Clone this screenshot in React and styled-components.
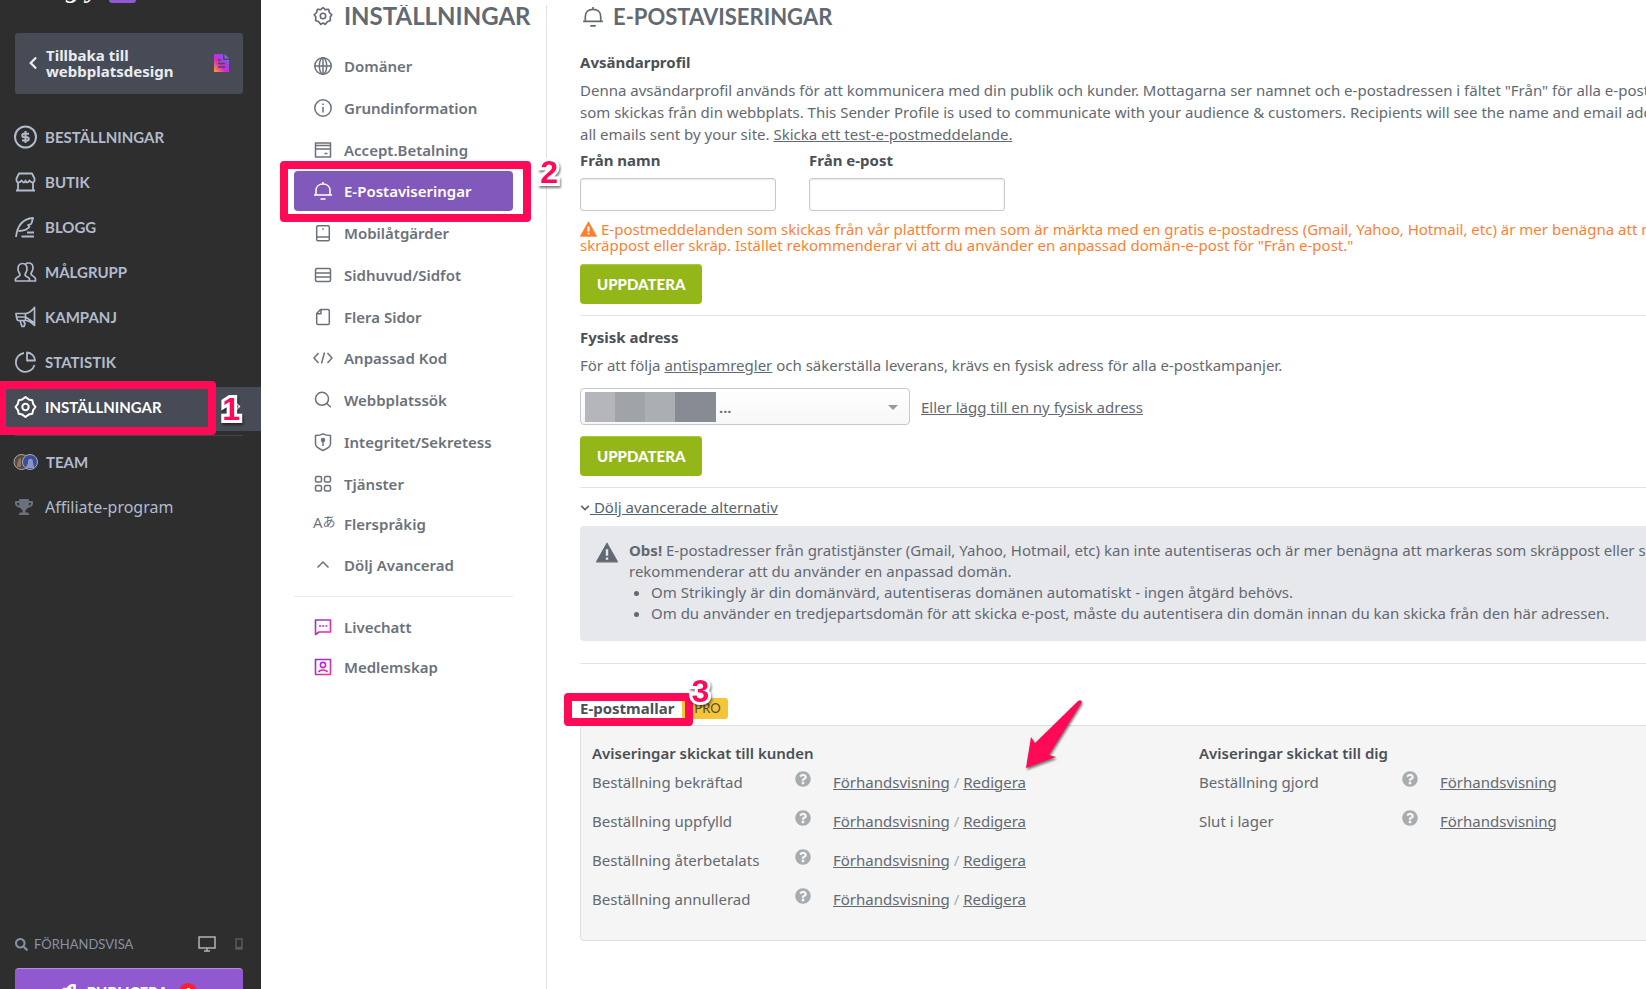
import React, { useState } from "react";
import styled, { createGlobalStyle } from "styled-components";
import { FaSearch, FaQuestionCircle, FaChevronLeft, FaChevronRight, FaChevronDown, FaTrophy, FaRocket } from "react-icons/fa";

const pink = "#ff0a57";
const sans = `"Noto Sans", "Open Sans", sans-serif`;
const display = `Lato, "Open Sans", sans-serif`;

const GlobalStyle = createGlobalStyle`
    * {
        box-sizing: border-box;
    }
    body {
        margin: 0;
        background: #fff;
        color: #636972;
        font-family: ${sans};
        font-size: 15px;
    }
    ul, h1, h2, h3, p {
        margin: 0;
        padding: 0;
    }
    a {
        color: inherit;
    }
`

const Page = styled.div`
    display: flex;
    height: 100vh;
    overflow: hidden;
`

/* dark sidebar */
const Sidebar = styled.aside`
    display: flex;
    flex-direction: column;
    flex: none;
    width: 261px;
    background: #2e2e2e;
    color: #b1bbcd;
`
const Logo = styled.div`
    display: flex;
    align-items: flex-end;
    gap: 11px;
    height: 33px;
    margin-top: -27px;
    margin-bottom: 27px;
    padding-right: 125px;
    justify-content: flex-end;
    color: #fff;
    font: italic bold 26px/33px "Liberation Serif", serif;
`
const Plan = styled.span`
    flex: none;
    width: 27px;
    height: 20px;
    margin: 0 0 3px;
    border-radius: 3px;
    background: #9159d0;
`
const BackLink = styled.a`
    display: flex;
    align-items: center;
    height: 61px;
    margin: 0 18px 23px 15px;
    padding: 0 14px 2px 11px;
    gap: 6px;
    border-radius: 3px;
    background: #474b55;
    color: #e9ecf2;
    font-weight: 700;
    font-size: 15px;
    line-height: 16px;
    text-decoration: none;

    span {
        flex: 1;
    }
`
const MainNav = styled.nav`
    display: flex;
    flex-direction: column;
    gap: 1px;
`
const NavLink = styled.a`
    position: relative;
    display: flex;
    align-items: center;
    height: 44px;
    padding: 0 18px 5px 13px;
    gap: 8px;
    background: ${props => props.$active ? "#474b55" : "none"};
    color: ${props => props.$active ? "#fff" : "inherit"};
    font-family: ${props => props.$plain ? sans : display};
    font-weight: ${props => props.$plain ? 400 : 700};
    font-size: ${props => props.$plain ? 16 : 15}px;
    text-decoration: none;

    > svg {
        flex: none;
    }
    > span {
        flex: 1;
    }
`
const NavLine = styled.hr`
    width: 228px;
    margin: 3px 15px 5px;
    border: 0;
    border-top: 1px solid #444;
`
const SidebarFooter = styled.div`
    margin: auto 18px -25px 15px;
`
const PreviewRow = styled.div`
    display: flex;
    align-items: center;
    height: 30px;
    margin-bottom: 9px;
    gap: 19px;
    color: #8791a6;
`
const PreviewButton = styled.button`
    display: flex;
    align-items: center;
    flex: 1;
    gap: 6px;
    padding: 0;
    border: 0;
    background: none;
    color: inherit;
    font: 400 13px ${display};
`
const PublishButton = styled.button`
    display: flex;
    align-items: center;
    justify-content: center;
    width: 100%;
    height: 46px;
    gap: 11px;
    border: 0;
    border-top: 1px solid #b78ae8;
    border-radius: 4px;
    background: #9159d0;
    color: #fff;
    font: 900 15px ${display};
`
const Alert = styled.span`
    width: 18px;
    height: 18px;
    border-radius: 50%;
    background: #f5222d;
    font: 700 15px/18px ${sans};
`

/* settings column */
const Settings = styled.aside`
    flex: none;
    width: 286px;
    margin-top: 5px;
    padding: 0 33px;
    border-right: 1px solid #dfe1e5;
`
const SettingsTitle = styled.h1`
    display: flex;
    align-items: center;
    height: 22px;
    margin: 0 -18px 19px 0;
    padding-left: 19px;
    gap: 11px;
    overflow: hidden;
    font: 700 24px/22px ${display};
    white-space: nowrap;

    svg {
        flex: none;
    }
`
const SettingsItem = styled.a`
    position: relative;
    display: flex;
    align-items: center;
    height: 40px;
    margin-bottom: ${props => props.$gap}px;
    padding-left: 19px;
    gap: 11px;
    border-radius: 4px;
    background: ${props => props.$active ? "#8159bb" : "none"};
    color: ${props => props.$active ? "#fff" : "#6b717b"};
    font-weight: 600;
    font-size: 15px;
    line-height: 22px;
    text-decoration: none;
    white-space: nowrap;

    svg {
        flex: none;
    }
`
const SettingsLine = styled.hr`
    margin: 11px 0 10px;
    border: 0;
    border-top: 1px solid #ececee;
`

/* main content */
const Main = styled.main`
    flex: 1;
    min-width: 0;
    padding: 5px 0 0 33px;
    overflow: hidden;
`
const Content = styled.div`
    min-width: 1238px;
`
const Title = styled.h2`
    display: flex;
    align-items: center;
    height: 24px;
    margin-bottom: 22px;
    padding-left: 2px;
    gap: 9px;
    font: 700 22px/24px ${display};
`
const Label = styled.h3`
    color: #4b5056;
    font-weight: ${props => props.$semi ? 600 : 700};
    font-size: 15px;
    line-height: 22px;
`
const Text = styled.p`
    margin: 6px 0 4px;
    line-height: 22px;
`
const Fields = styled.div`
    display: flex;
    gap: 33px;
`
const Field = styled.label`
    width: 196px;
    color: #4b5056;
    font-weight: 700;
    line-height: 22px;
`
const Input = styled.input`
    display: block;
    width: 100%;
    height: 33px;
    margin-top: 7px;
    border: 1px solid #c6c9d0;
    border-radius: 3px;
    box-shadow: inset 0 1px 2px #e9e9e9;
`
const Warning = styled.p`
    margin: 10px 0 11px;
    color: #ff7f32;
    line-height: 16px;

    svg {
        margin-right: 4px;
        vertical-align: -2px;
    }
`
const UpdateButton = styled.button`
    display: block;
    height: 40px;
    padding: 0 17px;
    border: 0;
    border-radius: 4px;
    background: #93b719;
    box-shadow: inset 0 1px 0 #a9cb38;
    color: #fff;
    font: 900 15px ${display};
`
const Line = styled.hr`
    margin: 11px 0 10px;
    border: 0;
    border-top: 1px solid #e2e4e7;
`
const AddressRow = styled.div`
    display: flex;
    align-items: center;
    gap: 11px;
    margin: 12px 0 11px;
`
const SelectBox = styled.div`
    position: relative;
    width: 330px;

    > svg {
        position: absolute;
        right: 12px;
        top: 17px;
        pointer-events: none;
    }
`
const Select = styled.select`
    display: block;
    appearance: none;
    width: 100%;
    height: 37px;
    padding: 0 30px 0 138px;
    border: 1px solid #c6c9cc;
    border-radius: 4px;
    background: linear-gradient(#fff, #f7f7f7);
    color: #636972;
    font: 600 15px ${sans};
`
const Mosaic = styled.div`
    position: absolute;
    left: 5px;
    top: 4px;
    display: grid;
    grid-template-columns: 30px 30px 30px 41px;
    height: 30px;
    pointer-events: none;
`
const Tile = styled.span`
    background: ${props => props.$color};
`
const Toggle = styled.a`
    display: block;
    width: fit-content;
    margin-bottom: 10px;
    color: #54636d;
    line-height: 18px;
`
const Notice = styled.div`
    display: flex;
    gap: 11px;
    margin-bottom: 22px;
    padding: 14px 16px 17px;
    border-radius: 4px;
    background: #e7e8ec;
    line-height: 21px;

    > svg {
        flex: none;
        margin-top: 2px;
    }
    ul {
        padding-left: 22px;
    }
`
const TemplatesHead = styled.div`
    display: flex;
    align-items: center;
    gap: 8px;
    height: 22px;
    margin: 33px 0 6px;
`
const Marked = styled.div`
    position: relative;
`
const Pro = styled.span`
    padding: 0 7px 0 12px;
    border-radius: 3px;
    background: #f4c536;
    color: #4f4a36;
    font: 400 13px/21px ${display};
`
const Panel = styled.div`
    display: grid;
    grid-template-columns: 1fr 1fr;
    padding: 16px 11px 17px;
    border: 1px solid #dcdddf;
    border-radius: 4px;
    background: #f5f5f5;
`
const Table = styled.table`
    width: 100%;
    margin-top: 3px;
    border-collapse: collapse;
    table-layout: fixed;

    td {
        height: 39px;
        padding: 0 0 10px;
    }
    td:first-child {
        width: 203px;
    }
    td:nth-child(2) {
        width: 38px;
        padding-bottom: 16px;
    }
`
const Help = styled.button`
    display: block;
    padding: 0;
    border: 0;
    background: none;
    color: #a7acb0;
    font-size: 16px;
    line-height: 0;
`
const Slash = styled.span`
    color: #a9adb3;
`

/* tutorial marks on top of the page */
const Frame = styled.span`
    position: absolute;
    z-index: 2;
    left: ${props => props.$left}px;
    right: ${props => props.$right}px;
    top: ${props => props.$top}px;
    bottom: ${props => props.$bottom}px;
    border: 8px solid ${pink};
    border-radius: 4px;
    pointer-events: none;
`
const Step = styled.b`
    position: absolute;
    z-index: 3;
    right: ${props => props.$right}px;
    top: ${props => props.$top}px;
    color: ${pink};
    font: 700 32px/32px "Liberation Sans", Arial, sans-serif;
    -webkit-text-stroke: 6px #fff;
    paint-order: stroke fill;
    filter: drop-shadow(1px 2px 1px rgba(0, 0, 0, 0.5));
    pointer-events: none;
`
const ArrowSpot = styled.span`
    position: relative;

    svg {
        position: absolute;
        left: 100%;
        bottom: calc(100% + 4px);
        overflow: visible;
        filter: drop-shadow(1px 2px 1px rgba(0, 0, 0, 0.5));
        pointer-events: none;
    }
`

const Icon = ({ size = 24, w = 2, box = 24, children, ...rest }) => (
    <svg width={size} height={size} viewBox={`0 0 ${box} ${box}`} fill="none" stroke="currentColor"
        strokeWidth={w} strokeLinejoin="round" aria-hidden="true" {...rest}>
        {children}
    </svg>
)

const gear = "M10 1.5 L12.2 3.6 L15.6 3.2 L16.4 6.5 L18.8 8.8 L17.2 11 L17.4 14.6 L14.3 15.7 L12.2 18.4 L10 17 L7.8 18.4 L5.7 15.7 L2.6 14.6 L2.8 11 L1.2 8.8 L3.6 6.5 L4.4 3.2 L7.8 3.6 Z"

const navIcons = {
    orders: <Icon><circle cx="12.5" cy="12" r="10.5" /><path d="M16 8.8h-5a1.7 1.7 0 0 0 0 3.4h3a1.7 1.7 0 0 1 0 3.400H9M12.5 6v12" /></Icon>,
    store: <Icon w="1.8"><path d="M6 3.5h13l2.5 5v2c0 1.5-1.500 2-2 2s-2-.500-3-2c-1 1.500-2 2-2.500 2s-1-.500-1.500-2c-.500 1.500-1 2-1.500 2s-1.500-.500-2.500-2c-1 1.500-2.500 2-3 2s-2-.500-2-2v-2zM5 12.5v8h15v-8M3 20.500h19" /></Icon>,
    blog: <Icon w="1.8"><path d="M3 22c1-9 5-18 17-19-1 3-1 5-2 6l-3 1 1.5 1.500C14 15.500 9 16 5.500 16M14 17.500h7M8.500 21.500H21" /></Icon>,
    people: <Icon w="1.7"><path d="M2.5 21v-2c1-2 4-2 4.500-4 0-1.500-2-3-2-6s1.500-5.500 4.500-5.500S14 6 14 9s-2 4.500-2 6c.500 2 4.500 2 4.500 4v2zM12.500 4c1-1 2-1 3-1 3 0 4.500 2 4.500 5s-2 4.500-2 6c.500 2 4.500 2.500 4.500 5v2h-6" /></Icon>,
    campaign: <Icon w="1.7"><path d="M21.5 2.500v18c-4-4-6-5-9-5H5.500c-1.500 0-1.500-1-2-3.500l-.500-3.500h9.500c3 0 5-1 9-6zM12.500 8.500v7M3.500 12h9M7 15.500l2 6h2l1-3-2-3M12.500 12l9 6" /></Icon>,
    stats: <Icon w="1.8"><path d="M11 3a9.5 9.5 0 1 0 10.500 12M14 2.500v8h8a8.500 8.500 0 0 0-8-8z" /></Icon>,
    settings: <Icon w="2"><path d="M12.5 2L15.700 4.400L19.300 5.200L20.100 8.800L22.500 12L20.100 15.200L19.300 18.800L15.700 19.600L12.500 22L9.300 19.600L5.700 18.800L4.900 15.200L2.500 12L4.900 8.800L5.700 5.200L9.300 4.400z" /><circle cx="12.5" cy="12" r="3.2" /></Icon>,
}

const bell = <path d="M1 14h18M3 14V9.500C3 5.500 6 3 10 3s7 2.500 7 6.500V14M10 1v2M7.500 18h5" />

const icons = {
    globe: <><circle cx="10" cy="10" r="8.2" /><ellipse cx="10" cy="10" rx="3.7" ry="8.2" /><path d="M1.8 10h16.4M10 1.8v16.4" /></>,
    info: <><circle cx="10" cy="10" r="8.2" /><path d="M10 9v5.5M10 5.5v1.8" /></>,
    card: <path d="M2.5 3h15v14h-15zM2.5 5.5h15M2.5 9h15M11.5 13.5h3" />,
    bell,
    mobile: <path d="M5 2.7h10q1.3 0 1.3 1.3v12.5q0 1.3-1.3 1.3H5q-1.3 0-1.3-1.300V4q0-1.300 1.300-1.300zM4 14h12M9.200 6h1.600" />,
    header: <path d="M4 3.5h12q1.5 0 1.5 1.5v10q0 1.5-1.5 1.5H4q-1.500 0-1.500-1.500V5q0-1.500 1.500-1.500zM2.500 8h15M2.500 12h15" />,
    pages: <path d="M7.5 2.5H15q1.3 0 1.3 1.3v12.4q0 1.3-1.3 1.3H5q-1.3 0-1.3-1.300V6.500zM8 2.500v4.300H3.700" />,
    code: <path d="M5.5 5L1 10l4.5 5M14.5 5l4.5 5-4.5 5M11.5 4.500l-3 11" />,
    search: <><circle cx="9" cy="8.8" r="6.5" /><path d="M13.8 13.5l4 3.700" /></>,
    shield: <><path d="M10 1.8c3 1.700 5 1.700 7.500 1.700V12c0 3-4 5-7.500 6.500C6.500 17 2.500 15 2.500 12V3.500c2.500 0 4.500 0 7.500-1.700z" /><path d="M10 8v6" /><circle cx="10" cy="8" r="1.5" fill="currentColor" /></>,
    grid: <><rect x="2.5" y="2.5" width="6" height="5.5" rx="1.5" /><rect x="11.5" y="2.5" width="6" height="5.5" rx="1.5" /><rect x="2.5" y="11.5" width="6" height="5.5" rx="1.5" /><rect x="11.5" y="11.5" width="6" height="5.5" rx="1.5" /></>,
    up: <path d="M4.5 12.5L10 7l5.500 5.500" />,
    chat: <path stroke="url(#rainbow)" d="M2.5 17.5V3h15v12H6zM6 9h2M9.200 9h2M12.400 9h2" />,
    member: <><path stroke="url(#rainbow)" d="M2.5 2.5h15v15h-15zM5.5 15c1.5-2.600 7.500-2.600 9 0" /><circle cx="10" cy="8" r="2.6" stroke="url(#rainbow)" /></>,
}

const Lang = styled.span`
    display: inline-flex;
    width: 20px;
    margin-top: -4px;
    font: 400 15px/20px "Open Sans", sans-serif;

    small {
        font: 400 13px/18px "Noto Sans CJK JP", sans-serif;
    }
`

const menu = [
    { icon: "orders", text: "BESTÄLLNINGAR" },
    { icon: "store", text: "BUTIK" },
    { icon: "blog", text: "BLOGG" },
    { icon: "people", text: "MÅLGRUPP" },
    { icon: "campaign", text: "KAMPANJ" },
    { icon: "stats", text: "STATISTIK" },
]

const settings = [
    { icon: "globe", text: "Domäner" },
    { icon: "info", text: "Grundinformation" },
    { icon: "card", text: "Accept.Betalning", gap: 1 },
    { icon: "bell", text: "E-Postaviseringar", active: true },
    { icon: "mobile", text: "Mobilåtgärder" },
    { icon: "header", text: "Sidhuvud/Sidfot" },
    { icon: "pages", text: "Flera Sidor", gap: 1 },
    { icon: "code", text: "Anpassad Kod" },
    { icon: "search", text: "Webbplatssök" },
    { icon: "shield", text: "Integritet/Sekretess" },
    { icon: "grid", text: "Tjänster", gap: 0 },
    { icon: "lang", text: "Flerspråkig", gap: 1 },
    { icon: "up", text: "Dölj Avancerad", gap: 0 },
]

const customerMails = ["Beställning bekräftad", "Beställning uppfylld", "Beställning återbetalats", "Beställning annullerad"]
const ownMails = ["Beställning gjord", "Slut i lager"]

const WarnIcon = ({ size, mark }) => (
    <svg width={size} height={size - 1} viewBox="0 0 20 18" aria-hidden="true">
        <path d="M10 .5L19.5 17.5H.5z" fill="currentColor" stroke="currentColor" strokeLinejoin="round" />
        <path d="M10 6v6M10 13.5v2" stroke={mark} strokeWidth="2.2" />
    </svg>
)

function MailTable({ rows, editable }) {
    return (
        <Table>
            <tbody>
                {rows.map((row, i) => (
                    <tr key={row}>
                        <td>{row}</td>
                        <td><Help aria-label="Hjälp"><FaQuestionCircle /></Help></td>
                        <td>
                            <a href="#preview">Förhandsvisning</a>
                            {editable && <>
                                <Slash> / </Slash>
                                <a href="#edit">Redigera</a>
                            </>}
                            {editable && i === 0 && <ArrowSpot>
                                <svg width="56" height="68" viewBox="0 0 56 68">
                                    <path d="M0 68L5 37l4 6L52 1q3-2 4 1L23 55l7 2z" fill={pink} />
                                </svg>
                            </ArrowSpot>}
                        </td>
                    </tr>
                ))}
            </tbody>
        </Table>
    )
}

export default function App() {

    const [sender, setSender] = useState({ name: "", email: "" });

    // Change Handler
    const changeHandler = e => {
        setSender({ ...sender, [e.target.name]: e.target.value })
    }

    return (
        <Page>
            <GlobalStyle />
            <Sidebar>
                <Logo>strikingly<Plan /></Logo>
                <BackLink href="#design">
                    <FaChevronLeft size={14} />
                    <span>Tillbaka till<br />webbplatsdesign</span>
                    <svg width="15" height="18" viewBox="0 0 15 18">
                        <defs>
                            <linearGradient id="doc" x1="0" y1="1" x2="1" y2="0">
                                <stop offset="0" stopColor="#ffa51f" />
                                <stop offset=".4" stopColor="#d727c9" />
                                <stop offset=".7" stopColor="#9a45f0" />
                                <stop offset="1" stopColor="#38a0f5" />
                            </linearGradient>
                        </defs>
                        <path d="M0 0h9v6h6v12H0zM10.5 0L15 4.5h-4.5z" fill="url(#doc)" />
                        <path d="M4 6h3M4 9.5h7M4 13h7" stroke="#474b55" strokeWidth="1.6" />
                    </svg>
                </BackLink>
                <MainNav>
                    {menu.map(item => (
                        <NavLink key={item.icon} href={"#" + item.icon}>
                            {navIcons[item.icon]}
                            <span>{item.text}</span>
                        </NavLink>
                    ))}
                    <NavLink href="#settings" $active>
                        {navIcons.settings}
                        <span>INSTÄLLNINGAR</span>
                        <FaChevronRight size={11} />
                        <Frame $left={-2} $right={45} $top={-6} $bottom={-4} />
                        <Step $right={21} $top={6}>1</Step>
                    </NavLink>
                    <NavLine />
                    <NavLink href="#team">
                        <svg width="25" height="18" viewBox="0 0 25 18">
                            <circle cx="8.5" cy="9" r="7.5" fill="#54483f" stroke="#a7adb8" />
                            <path d="M4 14c0-4 1-9 4-9v9z" fill="#8d7463" />
                            <circle cx="17" cy="9" r="7.5" fill="#3d4f94" stroke="#a7adb8" />
                            <path d="M13 15c0-3 2-3 2-5-1-5 5-6 5-1 0 3 1 3 1 6z" fill="#8f92c9" />
                        </svg>
                        <span>TEAM</span>
                    </NavLink>
                    <NavLink href="#affiliate" $plain>
                        <Icon stroke="none"><FaTrophy size={18} x="2" y="3" color="#6b717b" /></Icon>
                        <span>Affiliate-program</span>
                    </NavLink>
                </MainNav>
                <SidebarFooter>
                    <PreviewRow>
                        <PreviewButton><FaSearch size={13} />FÖRHANDSVISA</PreviewButton>
                        <svg width="18" height="16" viewBox="0 0 18 16">
                            <path d="M1 1h16v11H1zM9 12v3M6 15h6" fill="none" stroke="#b4b4b4" strokeWidth="1.5" />
                        </svg>
                        <svg width="8" height="12" viewBox="0 0 8 12">
                            <path d="M1 1h6v10H1zM1 9.5h6" fill="none" stroke="#535a66" strokeWidth="1.5" />
                        </svg>
                    </PreviewRow>
                    <PublishButton><FaRocket size={15} />PUBLICERA<Alert>!</Alert></PublishButton>
                </SidebarFooter>
            </Sidebar>

            <Settings>
                <SettingsTitle>
                    <Icon size={20} box={20} w="1.6">
                        <defs>
                            <linearGradient id="rainbow" x1="2" y1="2" x2="18" y2="18" gradientUnits="userSpaceOnUse">
                                <stop offset="0" stopColor="#8a2be2" />
                                <stop offset="1" stopColor="#ff2f8e" />
                            </linearGradient>
                        </defs>
                        <path d={gear} />
                        <circle cx="10" cy="10" r="2.7" />
                    </Icon>
                    INSTÄLLNINGAR
                </SettingsTitle>
                {settings.map(item => (
                    <SettingsItem key={item.text} href="#item" $active={item.active} $gap={item.gap ?? 2}>
                        {item.icon === "lang"
                            ? <Lang>A<small>あ</small></Lang>
                            : <Icon size={20} box={20} w="1.5">{icons[item.icon]}</Icon>}
                        {item.text}
                        {item.active && <>
                            <Frame $left={-14} $right={-18} $top={-10} $bottom={-11} />
                            <Step $right={-45} $top={-15}>2</Step>
                        </>}
                    </SettingsItem>
                ))}
                <SettingsLine />
                <SettingsItem href="#chat" $gap={0}><Icon size={20} box={20} w="1.6">{icons.chat}</Icon>Livechatt</SettingsItem>
                <SettingsItem href="#member" $gap={0}><Icon size={20} box={20} w="1.6">{icons.member}</Icon>Medlemskap</SettingsItem>
            </Settings>

            <Main>
                <Content>
                    <Title><Icon size={22} box={20} w="1.5">{bell}</Icon>E-POSTAVISERINGAR</Title>

                    <Label>Avsändarprofil</Label>
                    <Text>
                        Denna avsändarprofil används för att kommunicera med din publik och kunder. Mottagarna ser namnet och e-postadressen i fältet "Från" för alla e-postmeddelanden<br />
                        som skickas från din webbplats. This Sender Profile is used to communicate with your audience &amp; customers. Recipients will see the name and email address in<br />
                        all emails sent by your site. <a href="#test">Skicka ett test-e-postmeddelande.</a>
                    </Text>
                    <Fields>
                        <Field>Från namn<Input name="name" value={sender.name} onChange={changeHandler} /></Field>
                        <Field>Från e-post<Input name="email" value={sender.email} onChange={changeHandler} /></Field>
                    </Fields>
                    <Warning>
                        <WarnIcon size={17} mark="#fff" />
                        E-postmeddelanden som skickas från vår plattform men som är märkta med en gratis e-postadress (Gmail, Yahoo, Hotmail, etc) är mer benägna att markeras som<br />
                        skräppost eller skräp. Istället rekommenderar vi att du använder en anpassad domän-e-post för "Från e-post."
                    </Warning>
                    <UpdateButton>UPPDATERA</UpdateButton>
                    <Line />

                    <Label>Fysisk adress</Label>
                    <Text>
                        För att följa <a href="#antispam">antispamregler</a> och säkerställa leverans, krävs en fysisk adress för alla e-postkampanjer.
                    </Text>
                    <AddressRow>
                        <SelectBox>
                            <Select aria-label="Fysisk adress"><option>...</option></Select>
                            <Mosaic>
                                <Tile $color="#b4b6bb" />
                                <Tile $color="#a0a3a7" />
                                <Tile $color="#abaeb3" />
                                <Tile $color="#878b94" />
                            </Mosaic>
                            <svg width="10" height="5" viewBox="0 0 10 5"><path d="M0 0h10L5 5z" fill="#999" /></svg>
                        </SelectBox>
                        <a href="#address">Eller lägg till en ny fysisk adress</a>
                    </AddressRow>
                    <UpdateButton>UPPDATERA</UpdateButton>
                    <Line />

                    <Toggle href="#advanced"><FaChevronDown size={10} /> Dölj avancerade alternativ</Toggle>
                    <Notice>
                        <WarnIcon size={22} mark="#e7e8ec" />
                        <div>
                            <p>
                                <b>Obs!</b> E-postadresser från gratistjänster (Gmail, Yahoo, Hotmail, etc) kan inte autentiseras och är mer benägna att markeras som skräppost eller skräp. Vi<br />
                                rekommenderar att du använder en anpassad domän.
                            </p>
                            <ul>
                                <li>Om Strikingly är din domänvärd, autentiseras domänen automatiskt - ingen åtgärd behövs.</li>
                                <li>Om du använder en tredjepartsdomän för att skicka e-post, måste du autentisera din domän innan du kan skicka från den här adressen.</li>
                            </ul>
                        </div>
                    </Notice>
                    <Line />

                    <TemplatesHead>
                        <Marked>
                            <Label>E-postmallar</Label>
                            <Frame $left={-16} $right={-19} $top={-4} $bottom={-7} />
                            <Step $right={-35} $top={-22}>3</Step>
                        </Marked>
                        <Pro>PRO</Pro>
                    </TemplatesHead>
                    <Panel>
                        <div>
                            <Label $semi>Aviseringar skickat till kunden</Label>
                            <MailTable rows={customerMails} editable />
                        </div>
                        <div>
                            <Label $semi>Aviseringar skickat till dig</Label>
                            <MailTable rows={ownMails} />
                        </div>
                    </Panel>
                </Content>
            </Main>
        </Page>
    )
}
